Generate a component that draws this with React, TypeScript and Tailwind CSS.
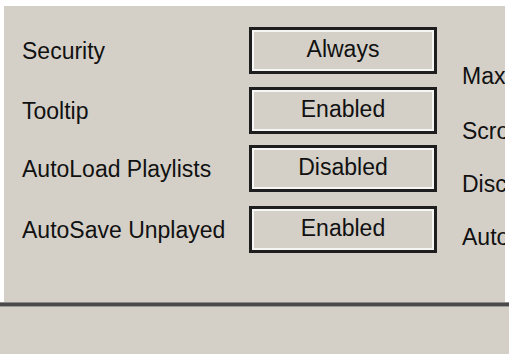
import React from "react";

const rows = [
  { label: "Security", value: "Always", mt: "mt-[21px]" },
  { label: "Tooltip", value: "Enabled", mt: "mt-[13px]" },
  { label: "AutoLoad Playlists", value: "Disabled", mt: "mt-[11px]" },
  { label: "AutoSave Unplayed", value: "Enabled", mt: "mt-[14px]" },
];

const right = [
  { label: "Max", mt: "mt-[56px]" },
  { label: "Scro", mt: "mt-[27px]" },
  { label: "Disc", mt: "mt-[25px]" },
  { label: "Auto", mt: "mt-[25px]" },
];

export default function App() {
  return (
    <div className="w-[509px] h-[354px] bg-white flex flex-col overflow-hidden font-['Liberation_Sans',Arial,sans-serif] text-[23px] leading-[28px] text-[#111]">
      <div className="h-[296px] mt-[6px] ml-[4px] mr-[4px] bg-[#d4d0c8] flex overflow-hidden shrink-0">
        <div className="flex flex-col shrink-0">
          {rows.map((r) => (
            <div key={r.label} className={`flex items-center h-[47px] ${r.mt}`}>
              <div className="w-[245px] pl-[18px] whitespace-nowrap">{r.label}</div>
              <div className="w-[188px] h-[47px] border-[3px] border-[#1e1e1e] bg-[#d4d0c8] shadow-[inset_0_0_0_2px_#f6f6f4] flex items-center justify-center pb-[3px] whitespace-nowrap">
                {r.value}
              </div>
            </div>
          ))}
        </div>
        <div className="flex flex-col pl-[25px] shrink-0">
          {right.map((r) => (
            <div key={r.label} className={`h-[28px] whitespace-nowrap ${r.mt}`}>
              {r.label}
            </div>
          ))}
        </div>
      </div>
      <div className="h-[1px] bg-[#8a8a88] shrink-0" />
      <div className="h-[3px] bg-[#4a4a4a] shrink-0" />
      <div className="h-[1px] bg-[#9a9a98] shrink-0" />
      <div className="flex-1 bg-[#d4d0c8]" />
    </div>
  );
}
